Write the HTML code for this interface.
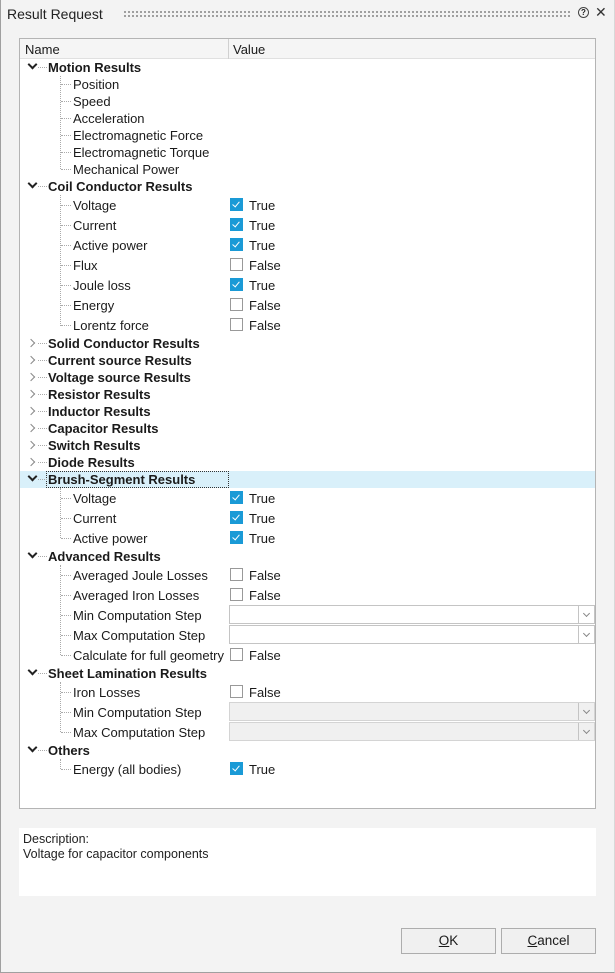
<!DOCTYPE html>
<html><head><meta charset="utf-8"><style>
*{margin:0;padding:0;box-sizing:border-box}
body{width:615px;height:973px;background:#f3f3f3;font-family:"Liberation Sans",sans-serif;font-size:13px;color:#1a1a1a;position:relative;overflow:hidden}
.frame{position:absolute;left:0;top:0;width:615px;height:973px;border-left:1px solid #a0a0a0;border-bottom:1px solid #a0a0a0;border-right:1px solid #d8d8d8}
.title{position:absolute;left:7px;top:6px;font-size:14px;color:#222}
.dots{position:absolute;left:123px;top:10px;width:448px;height:9px;background-image:radial-gradient(circle,#8a8a8a 0.9px,transparent 1.1px);background-size:4px 4px}
.tree{position:absolute;left:19px;top:38px;width:577px;height:771px;background:#fff;border:1px solid #b4b4b4}
.hdr{position:absolute;left:20px;top:39px;width:575px;height:20px;background:#f5f5f5;border-bottom:1px solid #e0e0e0}
.hdr span{position:absolute;top:3px}
.colsep{position:absolute;left:228px;top:39px;width:1px;height:20px;background:#d0d0d0}
.r{position:absolute;white-space:nowrap;line-height:15px}
.g{font-weight:bold;left:48px}
.c{left:73px}
.v{left:249px}
.cb{position:absolute;left:230px;width:13px;height:13px;border:1px solid #999;background:#fff}
.cb.on{background:#1a9ad6;border-color:#1a9ad6}
.cb.on::after{content:"";position:absolute;left:3px;top:1px;width:3px;height:6px;border:solid #fff;border-width:0 1.5px 1.5px 0;transform:rotate(40deg)}
.dd{position:absolute;left:229px;width:366px;height:19px;border:1px solid #c4c4c4;background:#fff}
.dd.dis{background:#f0f0f0;border-color:#d4d4d4}
.dd::after{content:"";position:absolute;right:0;top:0;width:15px;height:17px;border-left:1px solid #c4c4c4}
.dd i{position:absolute;right:5px;top:5px;width:5px;height:5px;border:solid #888;border-width:0 1px 1px 0;transform:rotate(45deg)}
.arr{position:absolute;left:29px;width:7px;height:7px;border:solid #222;border-width:0 2px 2px 0}
.arr.dn{transform:rotate(45deg)}
.arr.rt{transform:rotate(-45deg);border-color:#888;border-width:0 1.5px 1.5px 0;left:28px;width:6px;height:6px}
.vl{position:absolute;left:60px;width:1px;border-left:1px dotted #aaa}
.hl{position:absolute;left:61px;width:10px;border-top:1px dotted #aaa}
.gl{position:absolute;left:38px;width:9px;border-top:1px dotted #aaa}
.sel{position:absolute;left:20px;top:471px;width:575px;height:17px;background:#d9f0fa}
.focus{position:absolute;left:46px;top:471px;width:183px;height:17px;border:1px dotted #333}
.desc{position:absolute;left:19px;top:828px;width:577px;height:68px;background:#fff}
.desc div{position:absolute;left:4px;font-size:12.5px;color:#222}
.btn{position:absolute;top:928px;width:95px;height:26px;border:1px solid #adadad;background:#f0f0f0;text-align:center;line-height:24px;font-size:13.5px}
</style></head><body>
<div class="frame"></div>
<div class="title">Result Request</div>
<div class="dots"></div>
<div style="position:absolute;left:578px;top:7px;width:11px;height:11px;border:1px solid #444;border-radius:50%;font-size:8px;line-height:9px;text-align:center;font-weight:bold">?</div>
<div style="position:absolute;left:595px;top:4px;font-size:14px;color:#333">✕</div>
<div class="tree"></div>
<div class="hdr"><span style="left:5px">Name</span><span style="left:213px">Value</span></div>
<div class="colsep"></div>
<div class="sel"></div><div class="focus"></div>

<div class="vl" style="top:76px;height:93px"></div>
<div class="vl" style="top:195px;height:131px"></div>
<div class="vl" style="top:488px;height:50px"></div>
<div class="vl" style="top:565px;height:90px"></div>
<div class="vl" style="top:682px;height:50px"></div>
<div class="vl" style="top:759px;height:10px"></div>

<div id="rows"></div>
<script>
var R=[
['g','Motion Results',67,'dn'],['c','Position',84],['c','Speed',101],['c','Acceleration',118],['c','Electromagnetic Force',135],['c','Electromagnetic Torque',152],['c','Mechanical Power',169],
['g','Coil Conductor Results',186,'dn'],['c','Voltage',205,1],['c','Current',225,1],['c','Active power',245,1],['c','Flux',265,0],['c','Joule loss',285,1],['c','Energy',305,0],['c','Lorentz force',325,0],
['g','Solid Conductor Results',343,'rt'],['g','Current source Results',360,'rt'],['g','Voltage source Results',377,'rt'],['g','Resistor Results',394,'rt'],['g','Inductor Results',411,'rt'],['g','Capacitor Results',428,'rt'],['g','Switch Results',445,'rt'],['g','Diode Results',462,'rt'],
['g','Brush-Segment Results',479,'dn'],['c','Voltage',498,1],['c','Current',518,1],['c','Active power',538,1],
['g','Advanced Results',556,'dn'],['c','Averaged Joule Losses',575,0],['c','Averaged Iron Losses',595,0],['c','Min Computation Step',615,'d'],['c','Max Computation Step',635,'d'],['c','Calculate for full geometry',655,0],
['g','Sheet Lamination Results',673,'dn'],['c','Iron Losses',692,0],['c','Min Computation Step',712,'x'],['c','Max Computation Step',732,'x'],
['g','Others',750,'dn'],['c','Energy (all bodies)',769,1]];
var h='';
R.forEach(function(r){var y=r[2];
h+='<div class="r '+r[0]+'" style="top:'+(y-7)+'px">'+r[1]+'</div>';
if(r[0]=='g'){h+='<div class="arr '+r[3]+'" style="top:'+(r[3]=='dn'?y-6:y-3)+'px"></div><div class="gl" style="top:'+y+'px"></div>';}
else{h+='<div class="hl" style="top:'+y+'px"></div>';
 var v=r[3];
 if(v===1||v===0){h+='<div class="cb'+(v?' on':'')+'" style="top:'+(y-7)+'px"></div><div class="r v" style="top:'+(y-7)+'px">'+(v?'True':'False')+'</div>';}
 else if(v=='d'||v=='x'){h+='<div class="dd'+(v=='x'?' dis':'')+'" style="top:'+(y-10)+'px"><i></i></div>';}
}});
document.getElementById('rows').innerHTML=h;
</script>
<div class="desc"><div style="top:4px">Description:</div><div style="top:19px">Voltage for capacitor components</div></div>
<div class="btn" style="left:401px"><u>O</u>K</div>
<div class="btn" style="left:501px"><u>C</u>ancel</div>
</body></html>
